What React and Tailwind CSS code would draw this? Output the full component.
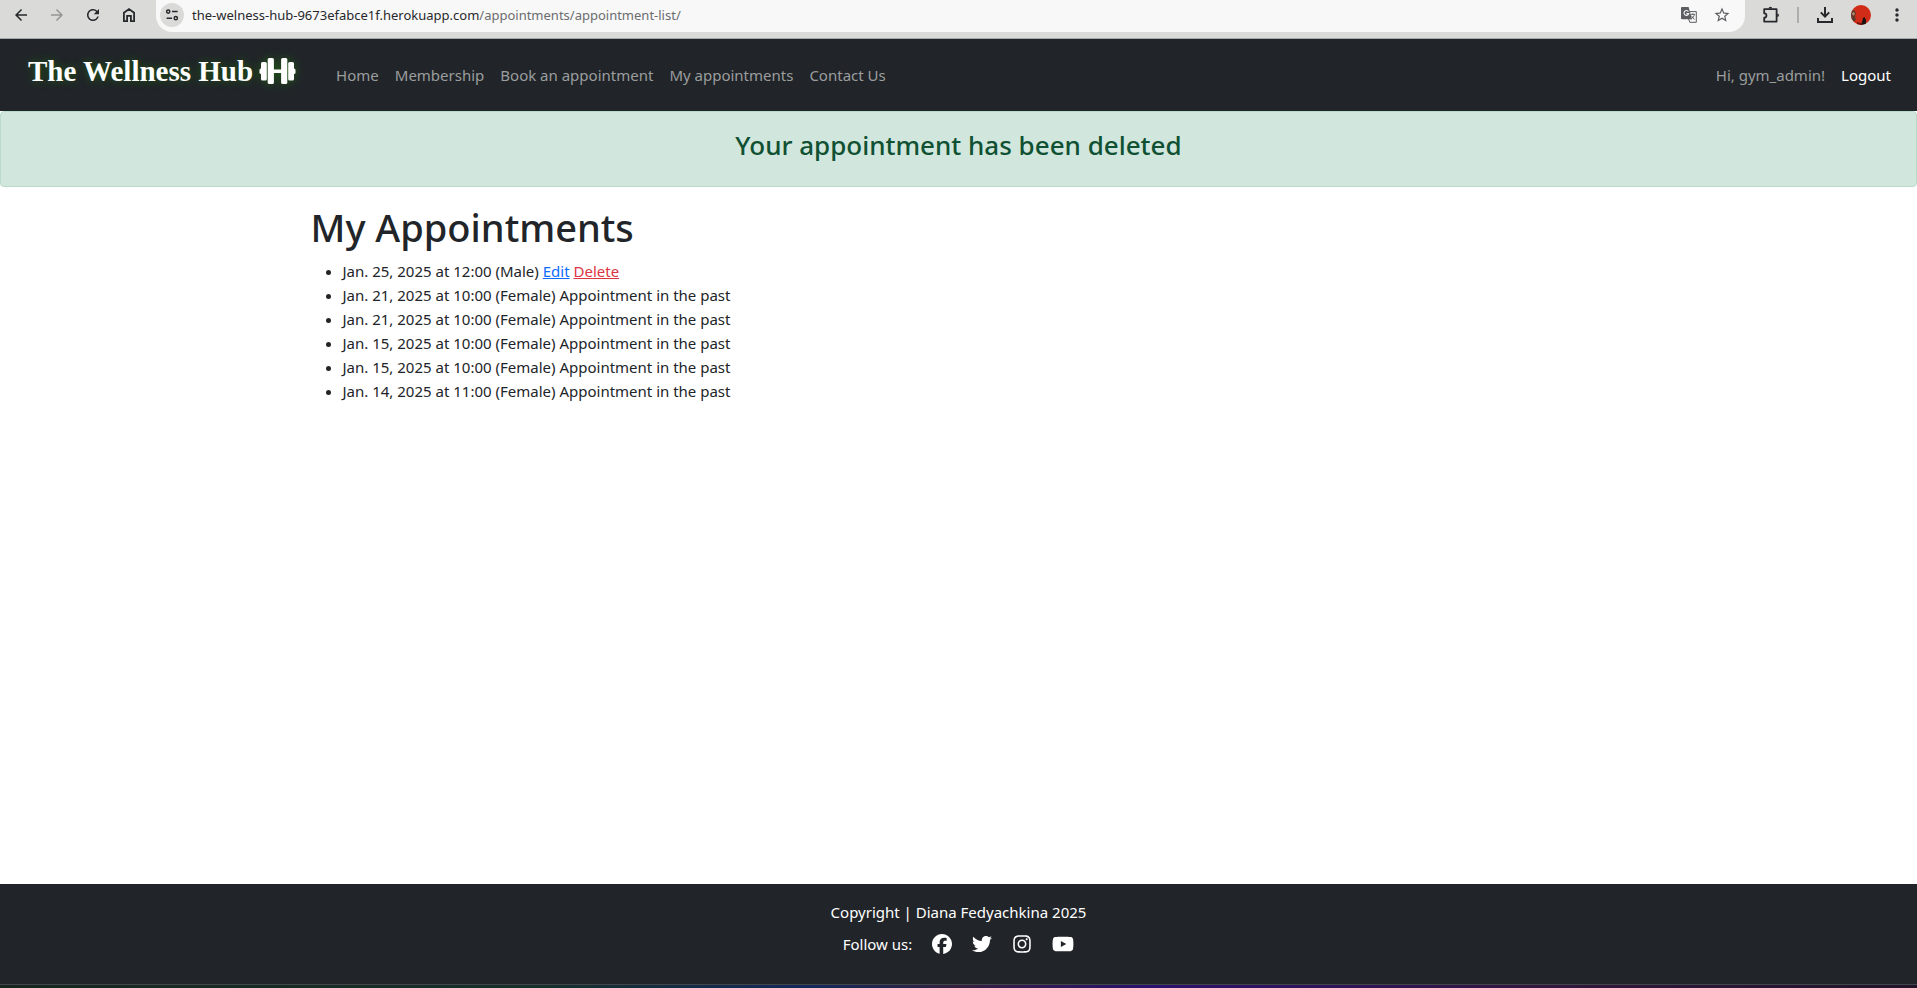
import { FaFacebook, FaTwitter, FaInstagram, FaYoutube } from "react-icons/fa6";
import { MdArrowBack, MdArrowForward, MdRefresh, MdStarBorder, MdMoreVert } from "react-icons/md";

const navLinks = ["Home", "Membership", "Book an appointment", "My appointments", "Contact Us"];

const appointments = [
  { when: "Jan. 25, 2025 at 12:00 (Male)", past: false },
  { when: "Jan. 21, 2025 at 10:00 (Female)", past: true },
  { when: "Jan. 21, 2025 at 10:00 (Female)", past: true },
  { when: "Jan. 15, 2025 at 10:00 (Female)", past: true },
  { when: "Jan. 15, 2025 at 10:00 (Female)", past: true },
  { when: "Jan. 14, 2025 at 11:00 (Female)", past: true },
];

const social = [
  { name: "Facebook", Icon: FaFacebook, size: "size-5" },
  { name: "Twitter", Icon: FaTwitter, size: "size-5" },
  { name: "Instagram", Icon: FaInstagram, size: "size-5" },
  { name: "YouTube", Icon: FaYoutube, size: "size-[22px]" },
];

function SiteSettingsIcon() {
  return (
    <svg viewBox="0 0 14 14" className="size-3.5" fill="none" stroke="currentColor" strokeWidth="1.5">
      <circle cx="3.2" cy="3.6" r="1.6" />
      <path d="M7 3.6H12.6M1.6 10.2H7" />
      <circle cx="10.8" cy="10.2" r="1.6" />
    </svg>
  );
}

function HomeIcon() {
  return (
    <svg viewBox="0 0 20 20" className="size-5" fill="none" stroke="currentColor" strokeWidth="1.8">
      <path d="M3.9 16.1V7.8L9 4l5.1 3.8v8.3h-3.2v-5.200H7.1v5.200z" />
    </svg>
  );
}

function ExtensionIcon() {
  return (
    <svg viewBox="0 0 20 20" className="size-5" fill="none" stroke="currentColor" strokeWidth="1.8" strokeLinejoin="round">
      <path d="M3.2 4.2h12.4v12.4H3.2v-3.9c3 0 3-4.400 0-4.400z" />
      <path d="M7.6 3.6a1.8 1.8 0 0 1 3.6 0zM16.2 8.5a1.8 1.8 0 0 1 0 3.6z" fill="currentColor" stroke="none" />
    </svg>
  );
}

function TranslateIcon() {
  return (
    <svg viewBox="0 0 16 16" className="size-4">
      <path d="M5 4.6h10.3v10.7H8.8z" fill="#f8f8f8" stroke="currentColor" strokeWidth="1" />
      <path d="M1 0h6.6l3.4 12.2H1a1 1 0 0 1-1-1V1a1 1 0 0 1 1-1z" fill="currentColor" />
      <path d="M7.4 4.6A2.4 2.4 0 1 0 7.7 6.6H5.4" fill="none" stroke="#f8f8f8" strokeWidth="1.1" />
      <path d="M9.4 7.4h4.8M11.8 6.2v1.2M13.4 7.4c-.4 2-1.6 3.6-3 4.6M10.6 8.8c.6 1.6 1.6 2.8 3 3.6" fill="none" stroke="currentColor" strokeWidth="0.9" />
    </svg>
  );
}

function DownloadIcon() {
  return (
    <svg viewBox="0 0 16 16" className="size-4" fill="none" stroke="currentColor" strokeWidth="2">
      <path d="M8 0v9.4M3.8 5.4 8 9.6l4.2-4.2M1 11v4h14v-4" />
    </svg>
  );
}

function AvatarPicture() {
  return (
    <svg viewBox="0 0 20 20" className="size-5 rounded-full">
      <path d="M0 0h20v20H0z" fill="#d02c17" />
      <path d="M0 6l3-1 2 3-1 3 1 4-3 2-2-3z" fill="#5d3a2c" />
      <path d="M1 8l2-1 1 2-2 2z" fill="#b98c73" />
      <path d="M12 13l1.500-1 1.500 3v5h-5l1-3z" fill="#1c1210" />
      <path d="M6 17l4 1v2H6z" fill="#75160d" />
    </svg>
  );
}

function DumbbellIcon() {
  return (
    <svg viewBox="0 0 37 26" className="h-[26px] w-[37px] drop-shadow-[0_0_4px_#1f5a12]" fill="currentColor">
      <rect x="14" y="11.500" width="9" height="3.500" />
      <rect x="0.500" y="10.500" width="4" height="5.500" rx="1.500" />
      <rect x="32.500" y="10.500" width="4" height="5.500" rx="1.500" />
      <rect x="2" y="4" width="5.800" height="18.500" rx="1.500" />
      <rect x="29.200" y="4" width="5.800" height="18.500" rx="1.500" />
      <rect x="8.700" y="0" width="6.200" height="26" rx="1.500" />
      <rect x="22.100" y="0" width="6.200" height="26" rx="1.500" />
    </svg>
  );
}

function BrowserBar() {
  return (
    <div className="flex h-[39px] items-start border-b border-[#a5a8a8] bg-[#dadad8] text-[#27282c]">
      <div className="flex h-[30px] items-center gap-4 pl-3">
        <button aria-label="Back" className="size-5"><MdArrowBack className="size-[18px]" /></button>
        <button aria-label="Forward" className="size-5 text-[#959596]"><MdArrowForward className="size-[18px]" /></button>
        <button aria-label="Reload" className="size-5"><MdRefresh className="size-[18px]" /></button>
        <button aria-label="Home" className="size-5"><HomeIcon /></button>
      </div>
      <div className="ml-4 flex h-8 flex-1 items-center rounded-b-2xl bg-[#f8f8f8] pr-[14px] pb-0.5 pl-1">
        <button aria-label="Site information" className="flex size-6 items-center justify-center rounded-full bg-[#dadad8]">
          <SiteSettingsIcon />
        </button>
        <div className="ml-2 text-[13px]">
          the-welness-hub-9673efabce1f.herokuapp.com<span className="text-[#6b6c6f]">/appointments/appointment-list/</span>
        </div>
        <div className="ml-auto flex items-center gap-4 text-[#5c5d60]">
          <button aria-label="Translate"><TranslateIcon /></button>
          <button aria-label="Bookmark"><MdStarBorder className="size-[18px]" /></button>
        </div>
      </div>
      <div className="flex h-[30px] items-center pr-2.5 pl-4">
        <button aria-label="Extensions"><ExtensionIcon /></button>
        <span className="mr-[18px] ml-4 h-4 w-0.5 bg-[#adadad]" />
        <button aria-label="Downloads"><DownloadIcon /></button>
        <button aria-label="Profile" className="mr-4 ml-[18px]"><AvatarPicture /></button>
        <button aria-label="Menu"><MdMoreVert className="size-5" /></button>
      </div>
    </div>
  );
}

export default function App() {
  return (
    <div className="flex min-h-screen flex-col bg-white font-['Noto_Sans','Open_Sans',sans-serif] text-[15px] leading-6 text-[#212529]">
      <BrowserBar />
      <header className="flex h-[72px] items-center bg-[#212529] pr-[26px] pl-7 text-[#9b9d9e]">
        <a href="#home" className="flex items-center gap-1.5 pb-2 font-['Liberation_Serif',serif] text-[29px] font-bold text-white [text-shadow:0_0_8px_#1f5a12]">
          The Wellness Hub
          <DumbbellIcon />
        </a>
        <nav className="ml-10 flex gap-4">
          {navLinks.map((label) => <a key={label} href="#nav">{label}</a>)}
        </nav>
        <div className="ml-auto flex gap-4">
          <span>Hi, gym_admin!</span>
          <a href="#logout" className="text-white">Logout</a>
        </div>
      </header>
      <div role="alert" className="h-[76px] rounded border border-[#badbcc] bg-[#d1e7dd] pt-4 text-center text-[#0f5132]">
        <h2 className="text-[26px] leading-[34px] font-medium">Your appointment has been deleted</h2>
      </div>
      <main className="mx-auto w-full max-w-[1320px] flex-1 px-3 pt-4">
        <h1 className="mb-2 text-[38px] leading-[48px] font-medium">My Appointments</h1>
        <ul className="list-disc pl-8">
          {appointments.map(({ when, past }, i) => (
            <li key={i}>
              {when}{" "}
              {past ? "Appointment in the past" : (
                <>
                  <a href="#edit" className="text-[#0d6efd] underline">Edit</a>{" "}
                  <a href="#delete" className="text-[#dc3545] underline">Delete</a>
                </>
              )}
            </li>
          ))}
        </ul>
      </main>
      <footer className="h-[100px] bg-[#212529] pt-4 text-center text-white">
        <p>Copyright | Diana Fedyachkina 2025</p>
        <div className="mt-2 flex items-center justify-center gap-5">
          <span>Follow us:</span>
          {social.map(({ name, Icon, size }) => (
            <a key={name} href="#social" aria-label={name}><Icon className={size} /></a>
          ))}
        </div>
      </footer>
      <div className="h-1 border-t border-[#43464b] bg-[linear-gradient(90deg,#16261f_0%,#16302a_28%,#12295a_42%,#33203f_50%,#2b106e_60%,#33163f_80%,#21152a_100%)]" />
    </div>
  );
}
